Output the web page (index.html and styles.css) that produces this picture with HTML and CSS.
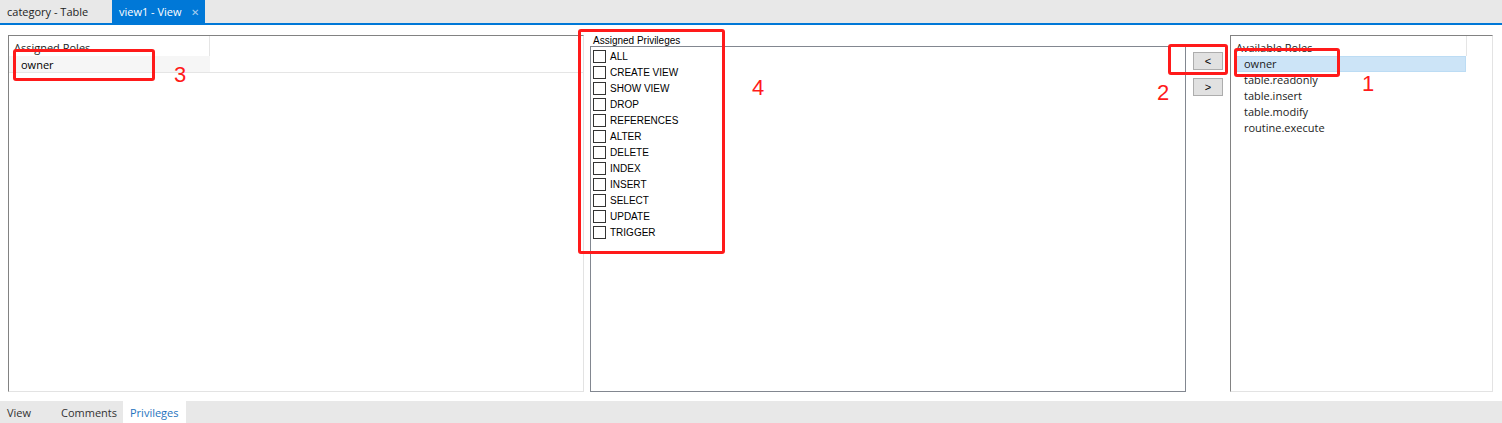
FILE: index.html
```html
<!DOCTYPE html>
<html lang="en">
<head>
    <meta charset="UTF-8">
    <title>view1 - View</title>
    <link rel="stylesheet" href="styles.css">
</head>
<body>
    <div class="doc-tabs">
        <div class="doc-tab">category - Table</div>
        <div class="doc-tab active">view1 - View <span class="tab-close">&#x2715;</span></div>
    </div>

    <div class="editor">
        <div class="grid-panel assigned">
            <div class="grid-head">
                <div class="grid-col">Assigned Roles</div>
            </div>
            <div class="grid-row">
                <div class="grid-col">owner</div>
            </div>
        </div>

        <div class="privileges">
            <div class="group-label">Assigned Privileges</div>
            <div class="priv-list">
                <label class="priv"><span class="check"></span>ALL</label>
                <label class="priv"><span class="check"></span>CREATE VIEW</label>
                <label class="priv"><span class="check"></span>SHOW VIEW</label>
                <label class="priv"><span class="check"></span>DROP</label>
                <label class="priv"><span class="check"></span>REFERENCES</label>
                <label class="priv"><span class="check"></span>ALTER</label>
                <label class="priv"><span class="check"></span>DELETE</label>
                <label class="priv"><span class="check"></span>INDEX</label>
                <label class="priv"><span class="check"></span>INSERT</label>
                <label class="priv"><span class="check"></span>SELECT</label>
                <label class="priv"><span class="check"></span>UPDATE</label>
                <label class="priv"><span class="check"></span>TRIGGER</label>
            </div>
        </div>

        <div class="move-buttons">
            <button class="move-btn">&lt;</button>
            <button class="move-btn">&gt;</button>
        </div>

        <div class="grid-panel available">
            <div class="grid-head">
                <div class="grid-col">Available Roles</div>
            </div>
            <ul class="role-list">
                <li class="selected">owner</li>
                <li>table.readonly</li>
                <li>table.insert</li>
                <li>table.modify</li>
                <li>routine.execute</li>
            </ul>
        </div>
    </div>

    <div class="page-tabs">
        <div class="page-tab">View</div>
        <div class="page-tab">Comments</div>
        <div class="page-tab active">Privileges</div>
    </div>

    <!-- red markers drawn over the screenshot -->
    <div class="mark box-3"></div>
    <div class="mark box-4"></div>
    <div class="mark box-2"></div>
    <div class="mark box-1"></div>
    <span class="mark-num num-3">3</span>
    <span class="mark-num num-4">4</span>
    <span class="mark-num num-2">2</span>
    <span class="mark-num num-1">1</span>
</body>
</html>
```

FILE: styles.css
```css
body {
    margin: 0;
    width: 1502px;
    height: 423px;
    overflow: hidden;
    position: relative;
    background: #ffffff;
    font-family: "Open Sans", "Noto Sans", sans-serif;
    font-size: 11px;
    color: #000;
}

/* top document tabs */
.doc-tabs {
    display: flex;
    height: 23px;
    background: #e8e8e8;
    border-bottom: 2px solid #0078d7;
}

.doc-tab {
    display: flex;
    align-items: center;
    width: 112px;
    box-sizing: border-box;
    padding: 0 0 0 7px;
    font-size: 11px;
    color: #1e1e1e;
}

.doc-tab.active {
    width: 93px;
    background: #0078d7;
    color: #ffffff;
    gap: 9px;
}

.tab-close {
    font-size: 10px;
    color: #a9cdee;
}

/* main editor area */
.editor {
    display: flex;
    height: 376px;
    box-sizing: border-box;
    padding: 10px 9px 9px 8px;
}

.grid-panel {
    box-sizing: border-box;
    border-top: 1px solid #828282;
    border-left: 1px solid #828282;
    border-right: 1px solid #e3e3e3;
    border-bottom: 1px solid #e3e3e3;
    background: #fff;
}

.grid-panel.assigned {
    width: 576px;
}

.grid-panel.available {
    width: 263px;
    margin-left: 7px;
}

.grid-head {
    display: flex;
    height: 20px;
}

.grid-head .grid-col {
    display: flex;
    align-items: flex-end;
    padding: 0 0 1px 5px;
    border-right: 1px solid #e5e5e5;
    box-sizing: border-box;
    color: #1b1b1b;
}

.assigned .grid-col {
    width: 201px;
}

.available .grid-col {
    width: 236px;
}

.grid-row {
    display: flex;
    height: 16px;
    border-bottom: 1px solid #e5e5e5;
}

.grid-row .grid-col {
    background: #f6f6f6;
    padding-left: 12px;
    display: flex;
    align-items: center;
    box-sizing: border-box;
}

/* privileges checklist */
.privileges {
    display: flex;
    flex-direction: column;
    width: 596px;
    margin-left: 6px;
}

.group-label {
    height: 11px;
    padding-left: 3px;
    font-family: "Liberation Sans", Arial, sans-serif;
    font-size: 10px;
    line-height: 11px;
}

.priv-list {
    flex: 1;
    box-sizing: border-box;
    border: 1px solid #828790;
    padding: 1px 0 0 2px;
}

.priv {
    display: flex;
    align-items: center;
    height: 16px;
    gap: 4px;
    font-family: "Liberation Sans", Arial, sans-serif;
    font-size: 10px;
}

.check {
    width: 11px;
    height: 11px;
    border: 1px solid #333333;
    background: #fff;
}

/* move buttons */
.move-buttons {
    display: flex;
    flex-direction: column;
    gap: 8px;
    margin-left: 7px;
    padding-top: 17px;
}

.move-btn {
    width: 30px;
    height: 18px;
    padding: 0;
    background: #e1e1e1;
    border: 1px solid #adadad;
    font-family: "Liberation Sans", Arial, sans-serif;
    font-size: 11px;
    color: #000;
}

/* available roles list */
.role-list {
    list-style: none;
    margin: 0;
    padding: 0 0 0 4px;
}

.role-list li {
    height: 16px;
    line-height: 16px;
    padding-left: 9px;
    width: 231px;
    box-sizing: border-box;
    color: #1b1b1b;
}

.role-list li.selected {
    background: #cce4f7;
    border: 1px solid #bcdcf4;
    line-height: 14px;
    padding-left: 8px;
}

/* bottom page tabs */
.page-tabs {
    display: flex;
    height: 22px;
    background: #e8e8e8;
}

.page-tab {
    display: flex;
    align-items: center;
    box-sizing: border-box;
    padding: 0 7px;
    font-size: 11px;
    color: #333;
}

.page-tab:first-child {
    width: 54px;
}

.page-tab:nth-child(2) {
    width: 69px;
}

.page-tab.active {
    width: 63px;
    background: #ffffff;
    color: #1e73be;
}

/* annotation overlay */
.mark {
    position: absolute;
    box-sizing: border-box;
    border: 3px solid #ff1a1a;
    border-radius: 3px;
}

.box-3 { left: 13px; top: 49px; width: 142px; height: 32px; }
.box-4 { left: 578px; top: 29px; width: 147px; height: 225px; }
.box-2 { left: 1168px; top: 44px; width: 60px; height: 31px; }
.box-1 { left: 1234px; top: 48px; width: 106px; height: 29px; }

.mark-num {
    position: absolute;
    font-family: "Liberation Sans", Arial, sans-serif;
    font-size: 22px;
    line-height: 22px;
    color: #ff1a1a;
}

.num-3 { left: 174px; top: 64px; }
.num-4 { left: 752px; top: 77px; }
.num-2 { left: 1157px; top: 82px; }
.num-1 { left: 1362px; top: 73px; }
```
